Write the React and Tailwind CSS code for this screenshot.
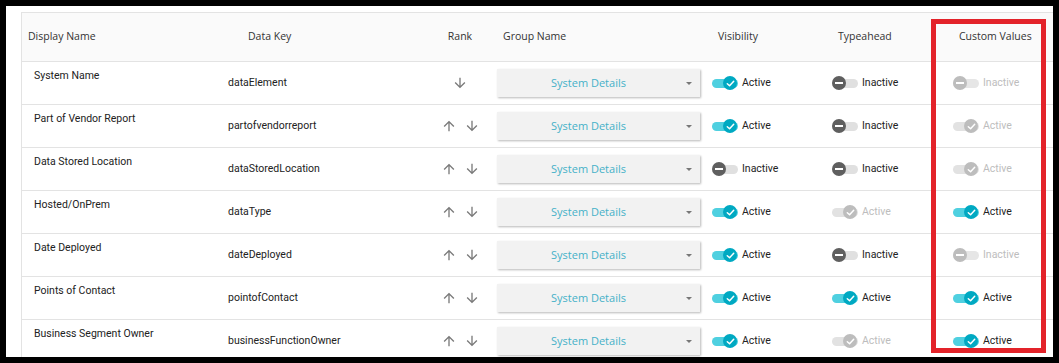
import React from "react";

const rows = [
  { name: "System Name", key: "dataElement", up: false, vis: "on", type: "off", custom: "off-dis" },
  { name: "Part of Vendor Report", key: "partofvendorreport", up: true, vis: "on", type: "off", custom: "on-dis" },
  { name: "Data Stored Location", key: "dataStoredLocation", up: true, vis: "off", type: "off", custom: "on-dis" },
  { name: "Hosted/OnPrem", key: "dataType", up: true, vis: "on", type: "on-dis", custom: "on" },
  { name: "Date Deployed", key: "dateDeployed", up: true, vis: "on", type: "off", custom: "off-dis" },
  { name: "Points of Contact", key: "pointofContact", up: true, vis: "on", type: "on", custom: "on" },
  { name: "Business Segment Owner", key: "businessFunctionOwner", up: true, vis: "on", type: "on-dis", custom: "on" },
];

const cols = "grid grid-cols-[198px_220px_40px_226px_120px_121px_1fr]";

const ArrowUp = () => (
  <svg width="16" height="16" viewBox="0 0 24 24" fill="#7a7a7a">
    <path d="M4 12l1.41 1.41L11 7.83V20h2V7.83l5.58 5.59L20 12l-8-8-8 8z" />
  </svg>
);

const ArrowDown = () => (
  <svg width="16" height="16" viewBox="0 0 24 24" fill="#7a7a7a">
    <path d="M20 12l-1.41-1.41L13 16.17V4h-2v12.17l-5.58-5.59L4 12l8 8 8-8z" />
  </svg>
);

const Toggle = ({ state }) => {
  const on = state.startsWith("on");
  const dis = state.endsWith("dis");
  const track = on ? (dis ? "bg-[#e2e2e2]" : "bg-[#4fd0e0]") : dis ? "bg-[#e6e6e6]" : "bg-[#e0e0e0]";
  const thumb = dis ? "bg-[#bdbdbd]" : on ? "bg-[#00a9c2]" : "bg-[#5f5f5f]";
  return (
    <div className="flex items-center">
      <div className="relative w-[26px] h-[14px] shrink-0">
        <div className={`absolute left-0 right-0 top-[3px] h-[9px] rounded-full ${track}`} />
        <div
          className={`absolute top-0 w-[14px] h-[14px] rounded-full flex items-center justify-center ${thumb} ${
            on ? "left-[11px]" : "left-0"
          }`}
        >
          {on ? (
            <svg width="11" height="11" viewBox="0 0 24 24" fill="none" stroke="white" strokeWidth="3.2" strokeLinecap="round" strokeLinejoin="round">
              <polyline points="5 12.5 10 17 19 7" />
            </svg>
          ) : (
            <div className="w-[8px] h-[2px] bg-white" />
          )}
        </div>
      </div>
      <span className={`ml-[4px] text-[10.5px] ${dis ? "text-[#bdbdbd]" : "text-[#222]"}`}>
        {on ? "Active" : "Inactive"}
      </span>
    </div>
  );
};

export default function App() {
  return (
    <div className="relative w-[1059px] h-[363px] border-[6px] border-black bg-white overflow-hidden font-['Roboto',sans-serif]">
      <div className="pl-[15px] pt-[6px]">
        <div className="border-l border-t border-[#e3e3e3]">
          {/* header */}
          <div className={`${cols} h-[49px] bg-[#fafafa] border-b border-[#e3e3e3] items-center text-[10.5px] text-[#333] font-['Open_Sans',sans-serif]`}>
            <div className="pl-[6px]">Display Name</div>
            <div className="pl-[28px]">Data Key</div>
            <div className="flex justify-center">Rank</div>
            <div className="pl-[23px]">Group Name</div>
            <div className="pl-[12px]">Visibility</div>
            <div className="pl-[12px]">Typeahead</div>
            <div className="pl-[12px]">Custom Values</div>
          </div>

          {rows.map((r) => (
            <div key={r.key} className={`${cols} h-[43px] border-b border-[#e3e3e3] text-[10.5px] text-[#222]`}>
              <div className="pl-[12px] pt-[6px]">{r.name}</div>
              <div className="pl-[8px] flex items-center">{r.key}</div>
              <div className="flex items-center justify-center gap-[7px]">
                {r.up && <ArrowUp />}
                <ArrowDown />
              </div>
              <div className="pl-[17px] flex items-center">
                <div className="relative w-[203px] h-[28px] bg-[#f2f2f2] shadow-[1px_1px_2px_rgba(0,0,0,0.28)] flex items-center justify-center">
                  <span className="text-[11px] text-[#45b1c8] font-['Open_Sans',sans-serif] -ml-[20px]">System Details</span>
                  <div className="absolute right-[8px] top-[13px] w-0 h-0 border-l-[3px] border-r-[3px] border-t-[3px] border-l-transparent border-r-transparent border-t-[#777]" />
                </div>
              </div>
              <div className="pl-[6px] flex items-center">
                <Toggle state={r.vis} />
              </div>
              <div className="pl-[6px] flex items-center">
                <Toggle state={r.type} />
              </div>
              <div className="pl-[6px] flex items-center">
                <Toggle state={r.custom} />
              </div>
            </div>
          ))}
        </div>
      </div>

      {/* highlight annotation */}
      <div className="absolute left-[925px] top-[13px] w-[115px] h-[334px] border-[5px] border-[#e3232a] pointer-events-none" />
    </div>
  );
}
